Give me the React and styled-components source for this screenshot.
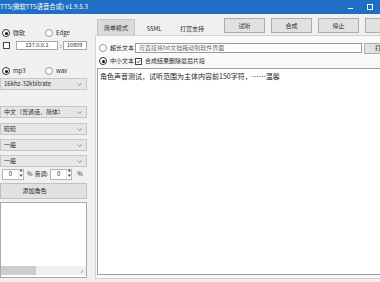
import React from "react";
import styled, { createGlobalStyle } from "styled-components";

const GlobalStyle = createGlobalStyle`
  html, body {
    margin: 0;
    padding: 0;
  }
  body {
    background: #f0f0f0;
    font-family: "Noto Sans CJK SC", "Noto Sans", sans-serif;
    font-size: 6px;
    line-height: 1;
    color: #2a2a2a;
  }
`;

const Chevron = () => (
  <svg width="5" height="3" viewBox="0 0 5 3">
    <path d="M0.5 0.5 L2.5 2.5 L4.5 0.5" fill="none" stroke="#777" strokeWidth="0.8" />
  </svg>
);

const Tick = () => (
  <svg width="5" height="5" viewBox="0 0 5 5">
    <path d="M0.8 2.6 L2 3.8 L4.3 1.1" fill="none" stroke="#222" strokeWidth="0.8" />
  </svg>
);

const App = () => {
  return (
    <Window>
      <GlobalStyle />
      <TitleBar>
        <Title>TTS(微软TTS语音合成) v1.9.5.3</Title>
        <WinControls>
          <WinBtn><MinLine /></WinBtn>
          <WinBtn><MaxBox /></WinBtn>
        </WinControls>
      </TitleBar>

      <Body>
        <LeftCol>
          <RadioRow $mt={14}>
            <RadioOption><Radio $on />微软</RadioOption>
            <RadioOption><Radio />Edge</RadioOption>
          </RadioRow>

          <IpRow>
            <Check />
            <TextBox $w={42} $ml={6}>127.0.0.1</TextBox>
            <Colon>:</Colon>
            <TextBox $w={24} $ml={1}>10809</TextBox>
          </IpRow>

          <RadioRow $mt={15}>
            <RadioOption><Radio $on />mp3</RadioOption>
            <RadioOption><Radio />wav</RadioOption>
          </RadioRow>

          <Select $mt={2}><span>16khz-32kbitrate</span><Chevron /></Select>
          <Select $mt={16}><span>中文（普通话，简体）</span><Chevron /></Select>
          <Select $mt={5}><span>晓晓</span><Chevron /></Select>
          <Select $mt={4}><span>一般</span><Chevron /></Select>
          <Select $mt={4}><span>一般</span><Chevron /></Select>

          <SpinRow>
            <SpinBox>0</SpinBox>
            <Spinner><span>▲</span><span>▼</span></Spinner>
            <SpinLabel $ml={3}>%</SpinLabel>
            <SpinLabel $ml={2}>音调:</SpinLabel>
            <SpinBox $ml={2}>0</SpinBox>
            <Spinner><span>▲</span><span>▼</span></Spinner>
            <SpinLabel $ml={5}>%</SpinLabel>
          </SpinRow>

          <AddButton>添加角色</AddButton>

          <ListBox>
            <HScroll>
              <Thumb />
              <ScrollArrow>›</ScrollArrow>
            </HScroll>
          </ListBox>
        </LeftCol>

        <RightCol>
          <HeaderRow>
            <Tabs>
              <Tab $active>简单模式</Tab>
              <Tab>SSML</Tab>
              <Tab>打赏支持</Tab>
            </Tabs>
            <Actions>
              <ActionButton>试听</ActionButton>
              <ActionButton>合成</ActionButton>
              <ActionButton>停止</ActionButton>
              <ActionButton>保存</ActionButton>
            </Actions>
          </HeaderRow>

          <TabPage>
            <PageRow $mt={7}>
              <RadioOption $w={36}><Radio />超长文本</RadioOption>
              <FileInput>可直接将txt文档拖动到软件界面</FileInput>
              <OpenButton>打开</OpenButton>
            </PageRow>
            <PageRow $mt={3}>
              <RadioOption $w={36}><Radio $on />中小文本</RadioOption>
              <CheckOption><Check $on><Tick /></Check>合成结果删除最后片段</CheckOption>
            </PageRow>
            <TextArea>角色声音测试，试听范围为主体内容前150字符，……温馨</TextArea>
          </TabPage>
        </RightCol>
      </Body>
    </Window>
  );
};

const Window = styled.div`
  width: 380px;
  height: 282px;
  overflow: hidden;
  background: #f0f0f0;
  display: flex;
  flex-direction: column;
`;

const TitleBar = styled.div`
  height: 14px;
  flex: none;
  background: #1f70c4;
  color: #fff;
  display: flex;
  align-items: center;
`;

const Title = styled.span`
  white-space: nowrap;
  font-size: 6.3px;
`;

const WinControls = styled.div`
  margin-left: auto;
  display: flex;
`;

const WinBtn = styled.span`
  width: 20px;
  height: 14px;
  display: flex;
  align-items: center;
  justify-content: center;
`;

const MinLine = styled.span`
  width: 5px;
  height: 1px;
  margin-top: 3px;
  background: #fff;
`;

const MaxBox = styled.span`
  width: 4px;
  height: 4px;
  border: 1px solid #fff;
`;

const Body = styled.div`
  flex: 1;
  min-height: 0;
  display: flex;
`;

const LeftCol = styled.div`
  width: 88px;
  flex: none;
  display: flex;
  flex-direction: column;
`;

const RadioRow = styled.div`
  height: 10px;
  margin-top: ${(p) => p.$mt}px;
  padding-left: 2px;
  display: flex;
  align-items: center;
`;

const RadioOption = styled.label`
  width: ${(p) => p.$w || 43}px;
  flex: none;
  display: flex;
  align-items: center;
  gap: 3px;
  white-space: nowrap;
`;

const Radio = styled.span`
  position: relative;
  width: 6px;
  height: 6px;
  flex: none;
  border-radius: 50%;
  background: #fff;
  border: 1px solid ${(p) => (p.$on ? "#333" : "#999")};
  &::after {
    content: "";
    display: ${(p) => (p.$on ? "block" : "none")};
    position: absolute;
    left: 1.5px;
    top: 1.5px;
    width: 3px;
    height: 3px;
    border-radius: 50%;
    background: #111;
  }
`;

const Check = styled.span`
  width: 5px;
  height: 5px;
  flex: none;
  background: #fff;
  border: 1px solid #444;
  display: flex;
  align-items: center;
  justify-content: center;
`;

const IpRow = styled.div`
  height: 11px;
  margin-top: 2px;
  padding-left: 3px;
  display: flex;
  align-items: center;
`;

const TextBox = styled.span`
  width: ${(p) => p.$w}px;
  height: 9px;
  margin-left: ${(p) => p.$ml}px;
  box-sizing: border-box;
  flex: none;
  background: #fff;
  border: 1px solid #a8a8a8;
  display: flex;
  align-items: center;
  justify-content: center;
  font-size: 5.5px;
`;

const Colon = styled.span`
  margin-left: 2px;
  font-size: 6px;
`;

const Select = styled.div`
  width: 87px;
  height: 12px;
  margin-top: ${(p) => p.$mt}px;
  box-sizing: border-box;
  padding: 0 4px 0 3px;
  background: #e6e6e6;
  border: 1px solid #c6c6c6;
  display: flex;
  align-items: center;
  justify-content: space-between;
  white-space: nowrap;
`;

const SpinRow = styled.div`
  height: 12px;
  margin-top: 1px;
  padding-left: 2px;
  display: flex;
  align-items: center;
`;

const SpinBox = styled.span`
  width: 16px;
  height: 11px;
  margin-left: ${(p) => p.$ml || 0}px;
  box-sizing: border-box;
  background: #fff;
  border: 1px solid #b5b5b5;
  border-right: none;
  display: flex;
  align-items: center;
  justify-content: center;
`;

const Spinner = styled.span`
  width: 6px;
  height: 11px;
  box-sizing: border-box;
  background: #fff;
  border: 1px solid #b5b5b5;
  border-left: 1px solid #e0e0e0;
  display: flex;
  flex-direction: column;
  align-items: center;
  justify-content: space-around;
  font-size: 3px;
  color: #444;
`;

const SpinLabel = styled.span`
  margin-left: ${(p) => p.$ml}px;
  white-space: nowrap;
`;

const AddButton = styled.div`
  width: 87px;
  height: 16px;
  margin-top: 3px;
  box-sizing: border-box;
  padding-right: 18px;
  background: #e1e1e1;
  border: 1px solid #c0c0c0;
  display: flex;
  align-items: center;
  justify-content: center;
`;

const ListBox = styled.div`
  width: 87px;
  height: 76px;
  margin-top: 3px;
  box-sizing: border-box;
  background: #fff;
  border: 1px solid #a9a9a9;
  display: flex;
  flex-direction: column;
  justify-content: flex-end;
`;

const HScroll = styled.div`
  height: 9px;
  margin-bottom: 2px;
  background: #f0f0f0;
  display: flex;
  align-items: center;
`;

const Thumb = styled.span`
  width: 35px;
  height: 9px;
  background: #cdcdcd;
`;

const ScrollArrow = styled.span`
  margin-left: auto;
  margin-right: 3px;
  font-size: 7px;
  color: #555;
`;

const RightCol = styled.div`
  width: 300px;
  margin-left: 7px;
  flex: none;
  display: flex;
  flex-direction: column;
`;

const HeaderRow = styled.div`
  height: 17px;
  margin-top: 4px;
  flex: none;
  display: flex;
`;

const Tabs = styled.div`
  margin-left: 2px;
  display: flex;
  align-items: flex-end;
`;

const Tab = styled.div`
  width: 38px;
  height: ${(p) => (p.$active ? 16 : 14)}px;
  box-sizing: border-box;
  background: ${(p) => (p.$active ? "#dadada" : "transparent")};
  border: 1px solid ${(p) => (p.$active ? "#c4c4c4" : "transparent")};
  border-bottom: none;
  display: flex;
  align-items: center;
  justify-content: center;
  white-space: nowrap;
`;

const Actions = styled.div`
  margin-left: 13px;
  display: flex;
  gap: 6px;
`;

const ActionButton = styled.div`
  width: 41px;
  height: 15px;
  flex: none;
  box-sizing: border-box;
  background: #e1e1e1;
  border: 1px solid #adadad;
  display: flex;
  align-items: center;
  justify-content: center;
`;

const TabPage = styled.div`
  flex: 1;
  margin-bottom: 3px;
  box-sizing: border-box;
  background: #f9f9f9;
  border: 1px solid #d2d2d2;
  display: flex;
  flex-direction: column;
`;

const PageRow = styled.div`
  height: 10px;
  margin-top: ${(p) => p.$mt}px;
  padding-left: 3px;
  display: flex;
  align-items: center;
`;

const FileInput = styled.div`
  width: 227px;
  height: 10px;
  flex: none;
  box-sizing: border-box;
  padding-left: 3px;
  background: #fff;
  border: 1px solid #9a9a9a;
  color: #6a6a6a;
  display: flex;
  align-items: center;
  white-space: nowrap;
`;

const OpenButton = styled.div`
  width: 34px;
  height: 11px;
  margin-left: 2px;
  flex: none;
  box-sizing: border-box;
  background: #e1e1e1;
  border: 1px solid #adadad;
  display: flex;
  align-items: center;
  justify-content: center;
`;

const CheckOption = styled.label`
  display: flex;
  align-items: center;
  gap: 3px;
  white-space: nowrap;
`;

const TextArea = styled.div`
  flex: 1;
  margin: 2px -2px 3px 1px;
  padding: 4px 2px;
  box-sizing: border-box;
  background: #fff;
  border: 1px solid #a0a0a0;
  font-size: 7px;
  color: #222;
  white-space: nowrap;
`;

export default App;
